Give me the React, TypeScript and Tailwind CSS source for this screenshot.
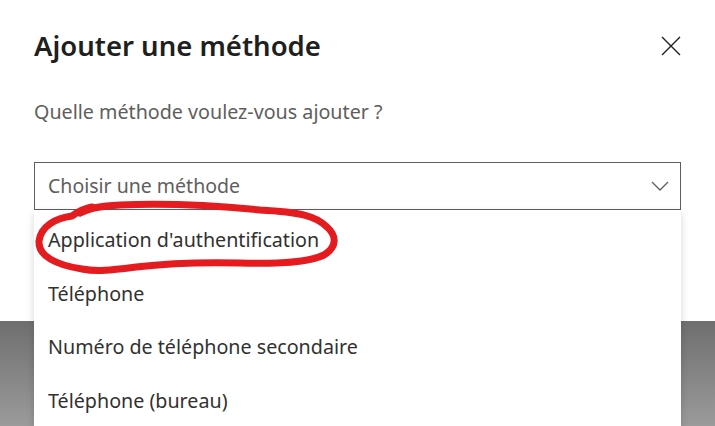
const options = [
  "Application d'authentification",
  "Téléphone",
  "Numéro de téléphone secondaire",
  "Téléphone (bureau)",
];

function CloseIcon() {
  return (
    <svg width="20" height="20" viewBox="0 0 20 20" fill="none" stroke="#201f1e" strokeWidth="1.4">
      <path d="M1 1 L19 19 M19 1 L1 19" />
    </svg>
  );
}

function ChevronDown() {
  return (
    <svg width="18" height="10" viewBox="0 0 18 10" fill="none" stroke="#605e5c" strokeWidth="1.3">
      <path d="M1 1 L9 9 L17 1" />
    </svg>
  );
}

// red hand-drawn circle around the first option
function Scribble() {
  return (
    <svg className="pointer-events-none absolute left-0 top-0 z-20" width="715" height="426" viewBox="0 0 715 426" fill="none">
      <path
        d="M92 207 C82 209 76 213 72 216 C56 218 41 226 39 241 C38 256 56 265 82 269 C97 272 112 270 136 267 C170 263 200 262 240 263 C280 264 310 262 324 255 C337 247 337 236 327 227 C316 216 300 212 260 210 C220 206 170 203 120 205 C100 206 90 208 80 213"
        stroke="#e41c1f"
        strokeWidth="7"
        strokeLinecap="round"
        strokeLinejoin="round"
      />
    </svg>
  );
}

export default function App() {
  return (
    <div
      className="relative flex h-[426px] w-[715px] flex-col overflow-hidden bg-white"
      style={{ fontFamily: '"Noto Sans", "Open Sans", sans-serif' }}
    >
      <div className="h-[321px] shrink-0 bg-white px-[34px] pt-[27px]">
        <div className="flex items-center justify-between">
          <h1 className="text-[27.5px] font-semibold leading-[38px] text-[#201f1e]">Ajouter une méthode</h1>
          <button type="button" className="flex h-[20px] w-[20px] items-center justify-center">
            <CloseIcon />
          </button>
        </div>
        <p className="mt-[33px] text-[19.7px] leading-[28px] text-[#605e5c]">Quelle méthode voulez-vous ajouter ?</p>
        <div className="relative mt-[36px]">
          <div className="flex h-[48px] items-center justify-between border border-[#605e5c] bg-white pl-[13px] pr-[11px]">
            <span className="text-[19.5px] text-[#605e5c]">Choisir une méthode</span>
            <ChevronDown />
          </div>
          <ul className="absolute left-0 top-full z-10 w-[647px] bg-white pt-[3px] shadow-[0_3px_8px_rgba(0,0,0,0.16)]">
            {options.map((o) => (
              <li key={o} className="flex h-[53.6px] items-center px-[14px] text-[19.7px] text-[#323130]">
                {o}
              </li>
            ))}
          </ul>
        </div>
      </div>
      <div className="flex-1 bg-gradient-to-b from-[#6f6f6f] to-[#9b9b9b]" />
      <Scribble />
    </div>
  );
}
